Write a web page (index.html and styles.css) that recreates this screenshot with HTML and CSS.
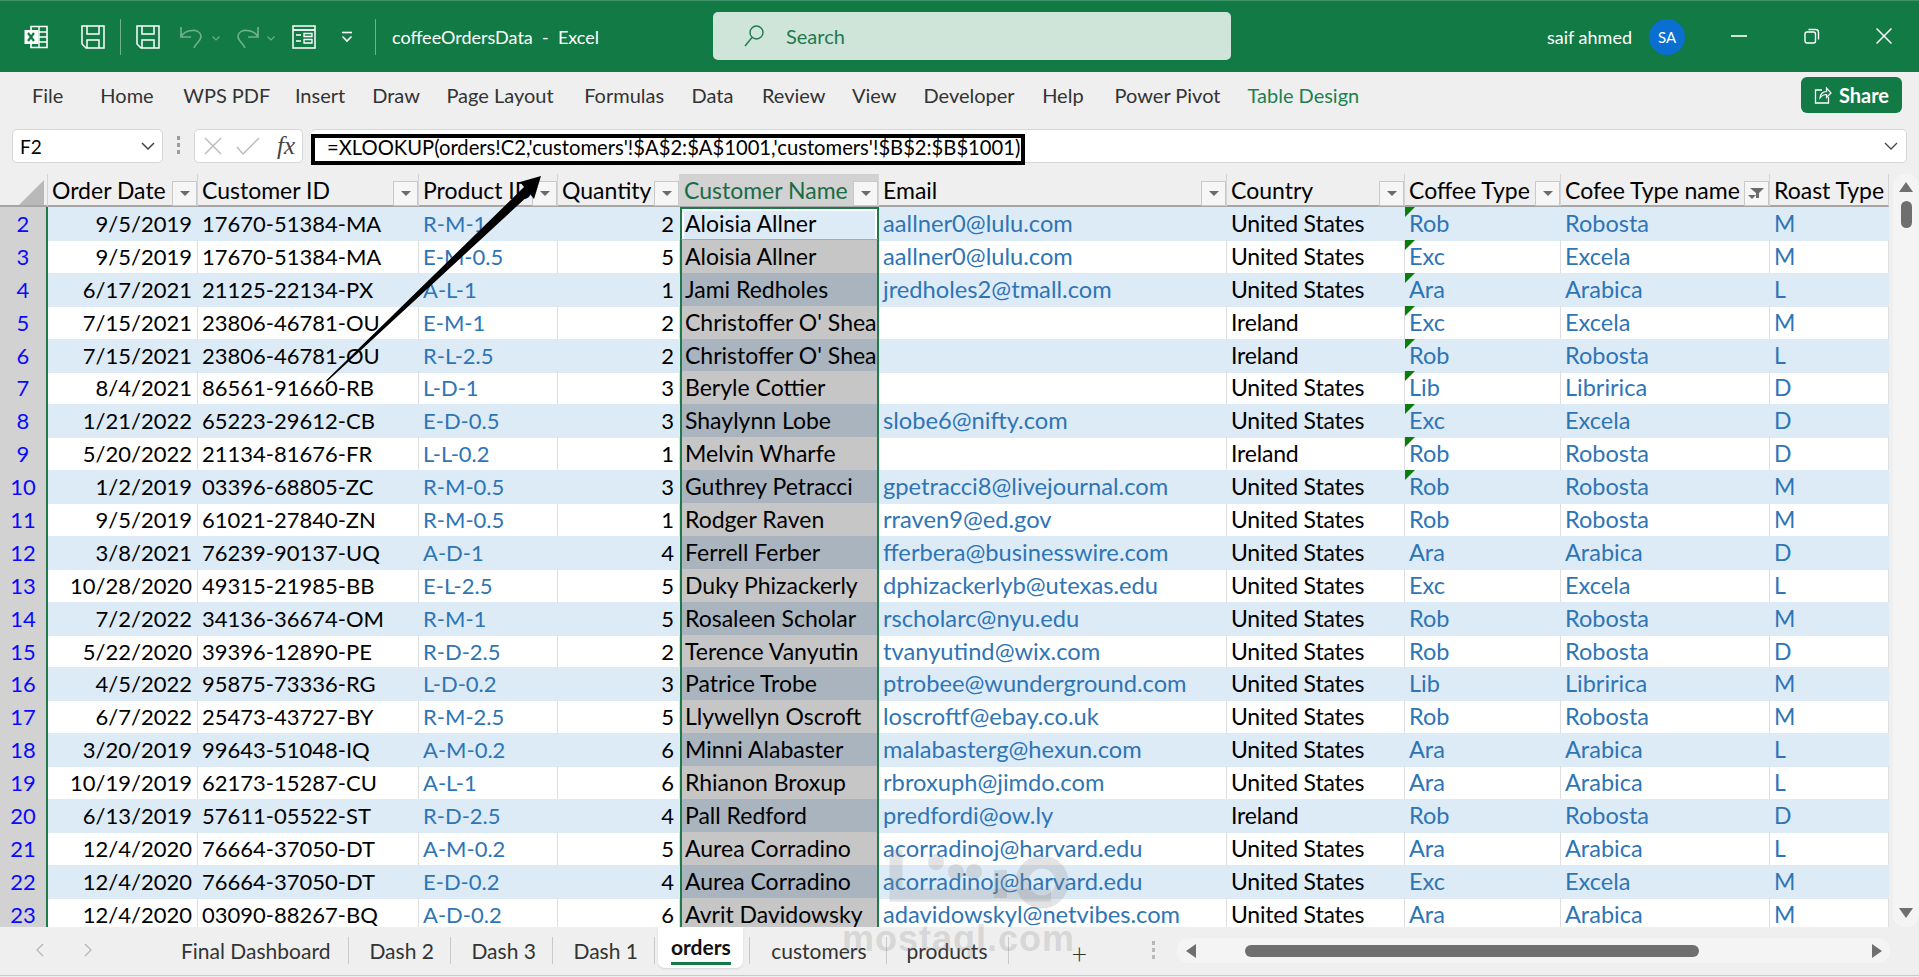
FILE: index.html
```html
<!DOCTYPE html>
<html lang="en">
<head>
<meta charset="utf-8">
<title>coffeeOrdersData - Excel</title>
<link rel="stylesheet" href="styles.css">
</head>
<body>
<header class="titlebar">
  <svg class="qa logo" viewBox="0 0 24 24" width="24" height="24"><path d="M7 1.5h16v21H7z" fill="none" stroke="#fff" stroke-width="1.6"/><path d="M15 1.5v21M15 7h8M15 12h8M15 17h8" stroke="#fff" stroke-width="1.4"/><rect x="0.5" y="5" width="14" height="14" fill="#fff"/><path d="M4 8l6 8M10 8l-6 8" stroke="#107c41" stroke-width="2.2"/></svg>
  <svg class="qa save1" viewBox="0 0 24 24" width="24" height="24"><path d="M1 1h22v22H5l-4-4z" fill="none" stroke="#fff" stroke-width="1.5"/><path d="M6 1v8h12V1M6 23v-8h12v8" fill="none" stroke="#fff" stroke-width="1.5"/></svg>
  <span class="tsep sep1"></span>
  <svg class="qa save2" viewBox="0 0 24 24" width="24" height="24"><path d="M1 1h22v22H5l-4-4z" fill="none" stroke="#fff" stroke-width="1.5"/><path d="M6 1v8h12V1M6 23v-8h12v8" fill="none" stroke="#fff" stroke-width="1.5"/></svg>
  <svg class="qa undo" viewBox="0 0 22 24" width="22" height="24"><path d="M1 2v10h10M1 12C5 4 20 3 21 11c0 5-5 7-7 12" fill="none" stroke="#6fb08f" stroke-width="1.7"/></svg>
  <svg class="qa chev chev1" viewBox="0 0 8 5" width="8" height="5"><path d="M.5.5L4 4 7.500.5" fill="none" stroke="#6fb08f" stroke-width="1.1"/></svg>
  <svg class="qa redo" viewBox="0 0 22 24" width="22" height="24"><path d="M21 2v10H11M21 12C17 4 2 3 1 11c0 5 5 7 7 12" fill="none" stroke="#6fb08f" stroke-width="1.7"/></svg>
  <svg class="qa chev chev2" viewBox="0 0 8 5" width="8" height="5"><path d="M.5.5L4 4 7.500.5" fill="none" stroke="#6fb08f" stroke-width="1.1"/></svg>
  <svg class="qa form" viewBox="0 0 24 24" width="24" height="24"><path d="M1 1h22v22H1z" fill="none" stroke="#fff" stroke-width="1.500"/><path d="M1 5h22" stroke="#fff" stroke-width="1.800"/><path d="M4 10h5M4 16h5" stroke="#fff" stroke-width="1.500"/><path d="M12 8.500h8v3h-8zM12 14.500h8v3.500h-8z" fill="none" stroke="#fff" stroke-width="1.300"/></svg>
  <svg class="qa drop" viewBox="0 0 12 12" width="12" height="12"><path d="M1 1.500h10" stroke="#fff" stroke-width="1.600"/><path d="M1.500 5.500L6 10l4.500-4.500" fill="none" stroke="#fff" stroke-width="1.600"/></svg>
  <span class="tsep sep2"></span>
  <span class="doc">coffeeOrdersData &nbsp;-&nbsp; Excel</span>
  <div class="search">
    <svg viewBox="0 0 20 22" width="20" height="22"><circle cx="12.500" cy="7.500" r="6.500" fill="none" stroke="#1f7a4c" stroke-width="1.400"/><path d="M8 12.500L1 21" stroke="#1f7a4c" stroke-width="1.400"/></svg>
    <span>Search</span>
  </div>
  <span class="user">saif ahmed</span>
  <span class="avatar">SA</span>
  <svg class="win wmin" viewBox="0 0 16 2" width="16" height="2"><path d="M0 1h16" stroke="#fff" stroke-width="1.600"/></svg>
  <svg class="win wres" viewBox="0 0 16 16" width="16" height="16"><rect x="1" y="4" width="10.500" height="11" rx="2" fill="none" stroke="#fff" stroke-width="1.400"/><path d="M4.500 1.500h7a3 3 0 0 1 3 3v7" fill="none" stroke="#fff" stroke-width="1.400"/></svg>
  <svg class="win wclose" viewBox="0 0 16 16" width="16" height="16"><path d="M.5.5l15 15M15.500.5l-15 15" stroke="#fff" stroke-width="1.500"/></svg>
</header>

<nav class="ribbon">
  <span class="rt rt-file">File</span><span class="rt rt-home">Home</span><span class="rt rt-wps">WPS PDF</span><span class="rt rt-ins">Insert</span><span class="rt rt-draw">Draw</span><span class="rt rt-page">Page Layout</span><span class="rt rt-form">Formulas</span><span class="rt rt-data">Data</span><span class="rt rt-rev">Review</span><span class="rt rt-view">View</span><span class="rt rt-dev">Developer</span><span class="rt rt-help">Help</span><span class="rt rt-pp">Power Pivot</span><span class="rt rt-td">Table Design</span>
  <button class="share"><svg viewBox="0 0 18 18" width="18" height="18"><path d="M8 4H1.500v13h13v-6" fill="none" stroke="#fff" stroke-width="1.300"/><path d="M6 12c0-4 3-6.500 6.500-6.500V2L17 7l-4.500 4.500V8.500C9.500 8.500 7.500 10 6 12z" fill="none" stroke="#fff" stroke-width="1.200"/></svg>Share</button>
</nav>

<section class="formula">
  <div class="namebox"><span>F2</span><svg viewBox="0 0 14 8" width="14" height="8"><path d="M1 1l6 6 6-6" fill="none" stroke="#444" stroke-width="1.500"/></svg></div>
  <div class="fdots"><i></i><i></i><i></i></div>
  <div class="fxbox">
    <svg viewBox="0 0 18 18" width="18" height="18"><path d="M1 1l16 16M17 1L1 17" stroke="#bdbdbd" stroke-width="1.500"/></svg>
    <svg viewBox="0 0 24 18" width="24" height="18"><path d="M1 10l6 7L23 1" fill="none" stroke="#bdbdbd" stroke-width="1.500"/></svg>
    <em>fx</em>
  </div>
  <div class="fbar">
    <div class="fhl">=XLOOKUP(orders!C2,'customers'!$A$2:$A$1001,'customers'!$B$2:$B$1001)</div>
    <svg class="fexp" viewBox="0 0 14 8" width="14" height="8"><path d="M1 1l6 6 6-6" fill="none" stroke="#444" stroke-width="1.300"/></svg>
  </div>
</section>

<main class="sheet">
  <div class="grid">
    <div class="row head">
      <div class="hc corner"><i></i></div>
      <div class="hc">Order Date<b class="fb"></b></div>
      <div class="hc">Customer ID<b class="fb"></b></div>
      <div class="hc">Product ID<b class="fb"></b></div>
      <div class="hc">Quantity<b class="fb"></b></div>
      <div class="hc hsel">Customer Name<b class="fb"></b></div>
      <div class="hc">Email<b class="fb"></b></div>
      <div class="hc">Country<b class="fb"></b></div>
      <div class="hc">Coffee Type<b class="fb"></b></div>
      <div class="hc">Cofee Type name<b class="fb on"><svg viewBox="0 0 14 10" width="14" height="10"><path d="M0 0h14L9 5v5H6V5z" fill="#6b6b6b"/></svg></b></div>
      <div class="hc">Roast Type</div>
    </div>
    <div class="row blue active"><div class="rn">2</div><div class="c r">9/5/2019</div><div class="c">17670-51384-MA</div><div class="c l">R-M-1</div><div class="c r">2</div><div class="c s">Aloisia Allner</div><div class="c l">aallner0@lulu.com</div><div class="c">United States</div><div class="c l t">Rob</div><div class="c l">Robosta</div><div class="c l">M</div></div>
    <div class="row"><div class="rn">3</div><div class="c r">9/5/2019</div><div class="c">17670-51384-MA</div><div class="c l">E-M-0.5</div><div class="c r">5</div><div class="c s">Aloisia Allner</div><div class="c l">aallner0@lulu.com</div><div class="c">United States</div><div class="c l t">Exc</div><div class="c l">Excela</div><div class="c l">M</div></div>
    <div class="row blue"><div class="rn">4</div><div class="c r">6/17/2021</div><div class="c">21125-22134-PX</div><div class="c l">A-L-1</div><div class="c r">1</div><div class="c s">Jami Redholes</div><div class="c l">jredholes2@tmall.com</div><div class="c">United States</div><div class="c l t">Ara</div><div class="c l">Arabica</div><div class="c l">L</div></div>
    <div class="row"><div class="rn">5</div><div class="c r">7/15/2021</div><div class="c">23806-46781-OU</div><div class="c l">E-M-1</div><div class="c r">2</div><div class="c s">Christoffer O' Shea</div><div class="c l"></div><div class="c">Ireland</div><div class="c l t">Exc</div><div class="c l">Excela</div><div class="c l">M</div></div>
    <div class="row blue"><div class="rn">6</div><div class="c r">7/15/2021</div><div class="c">23806-46781-OU</div><div class="c l">R-L-2.5</div><div class="c r">2</div><div class="c s">Christoffer O' Shea</div><div class="c l"></div><div class="c">Ireland</div><div class="c l t">Rob</div><div class="c l">Robosta</div><div class="c l">L</div></div>
    <div class="row"><div class="rn">7</div><div class="c r">8/4/2021</div><div class="c">86561-91660-RB</div><div class="c l">L-D-1</div><div class="c r">3</div><div class="c s">Beryle Cottier</div><div class="c l"></div><div class="c">United States</div><div class="c l t">Lib</div><div class="c l">Libririca</div><div class="c l">D</div></div>
    <div class="row blue"><div class="rn">8</div><div class="c r">1/21/2022</div><div class="c">65223-29612-CB</div><div class="c l">E-D-0.5</div><div class="c r">3</div><div class="c s">Shaylynn Lobe</div><div class="c l">slobe6@nifty.com</div><div class="c">United States</div><div class="c l t">Exc</div><div class="c l">Excela</div><div class="c l">D</div></div>
    <div class="row"><div class="rn">9</div><div class="c r">5/20/2022</div><div class="c">21134-81676-FR</div><div class="c l">L-L-0.2</div><div class="c r">1</div><div class="c s">Melvin Wharfe</div><div class="c l"></div><div class="c">Ireland</div><div class="c l t">Rob</div><div class="c l">Robosta</div><div class="c l">D</div></div>
    <div class="row blue"><div class="rn">10</div><div class="c r">1/2/2019</div><div class="c">03396-68805-ZC</div><div class="c l">R-M-0.5</div><div class="c r">3</div><div class="c s">Guthrey Petracci</div><div class="c l">gpetracci8@livejournal.com</div><div class="c">United States</div><div class="c l t">Rob</div><div class="c l">Robosta</div><div class="c l">M</div></div>
    <div class="row"><div class="rn">11</div><div class="c r">9/5/2019</div><div class="c">61021-27840-ZN</div><div class="c l">R-M-0.5</div><div class="c r">1</div><div class="c s">Rodger Raven</div><div class="c l">rraven9@ed.gov</div><div class="c">United States</div><div class="c l">Rob</div><div class="c l">Robosta</div><div class="c l">M</div></div>
    <div class="row blue"><div class="rn">12</div><div class="c r">3/8/2021</div><div class="c">76239-90137-UQ</div><div class="c l">A-D-1</div><div class="c r">4</div><div class="c s">Ferrell Ferber</div><div class="c l">fferbera@businesswire.com</div><div class="c">United States</div><div class="c l">Ara</div><div class="c l">Arabica</div><div class="c l">D</div></div>
    <div class="row"><div class="rn">13</div><div class="c r">10/28/2020</div><div class="c">49315-21985-BB</div><div class="c l">E-L-2.5</div><div class="c r">5</div><div class="c s">Duky Phizackerly</div><div class="c l">dphizackerlyb@utexas.edu</div><div class="c">United States</div><div class="c l">Exc</div><div class="c l">Excela</div><div class="c l">L</div></div>
    <div class="row blue"><div class="rn">14</div><div class="c r">7/2/2022</div><div class="c">34136-36674-OM</div><div class="c l">R-M-1</div><div class="c r">5</div><div class="c s">Rosaleen Scholar</div><div class="c l">rscholarc@nyu.edu</div><div class="c">United States</div><div class="c l">Rob</div><div class="c l">Robosta</div><div class="c l">M</div></div>
    <div class="row"><div class="rn">15</div><div class="c r">5/22/2020</div><div class="c">39396-12890-PE</div><div class="c l">R-D-2.5</div><div class="c r">2</div><div class="c s">Terence Vanyutin</div><div class="c l">tvanyutind@wix.com</div><div class="c">United States</div><div class="c l">Rob</div><div class="c l">Robosta</div><div class="c l">D</div></div>
    <div class="row blue"><div class="rn">16</div><div class="c r">4/5/2022</div><div class="c">95875-73336-RG</div><div class="c l">L-D-0.2</div><div class="c r">3</div><div class="c s">Patrice Trobe</div><div class="c l">ptrobee@wunderground.com</div><div class="c">United States</div><div class="c l">Lib</div><div class="c l">Libririca</div><div class="c l">M</div></div>
    <div class="row"><div class="rn">17</div><div class="c r">6/7/2022</div><div class="c">25473-43727-BY</div><div class="c l">R-M-2.5</div><div class="c r">5</div><div class="c s">Llywellyn Oscroft</div><div class="c l">loscroftf@ebay.co.uk</div><div class="c">United States</div><div class="c l">Rob</div><div class="c l">Robosta</div><div class="c l">M</div></div>
    <div class="row blue"><div class="rn">18</div><div class="c r">3/20/2019</div><div class="c">99643-51048-IQ</div><div class="c l">A-M-0.2</div><div class="c r">6</div><div class="c s">Minni Alabaster</div><div class="c l">malabasterg@hexun.com</div><div class="c">United States</div><div class="c l">Ara</div><div class="c l">Arabica</div><div class="c l">L</div></div>
    <div class="row"><div class="rn">19</div><div class="c r">10/19/2019</div><div class="c">62173-15287-CU</div><div class="c l">A-L-1</div><div class="c r">6</div><div class="c s">Rhianon Broxup</div><div class="c l">rbroxuph@jimdo.com</div><div class="c">United States</div><div class="c l">Ara</div><div class="c l">Arabica</div><div class="c l">L</div></div>
    <div class="row blue"><div class="rn">20</div><div class="c r">6/13/2019</div><div class="c">57611-05522-ST</div><div class="c l">R-D-2.5</div><div class="c r">4</div><div class="c s">Pall Redford</div><div class="c l">predfordi@ow.ly</div><div class="c">Ireland</div><div class="c l">Rob</div><div class="c l">Robosta</div><div class="c l">D</div></div>
    <div class="row"><div class="rn">21</div><div class="c r">12/4/2020</div><div class="c">76664-37050-DT</div><div class="c l">A-M-0.2</div><div class="c r">5</div><div class="c s">Aurea Corradino</div><div class="c l">acorradinoj@harvard.edu</div><div class="c">United States</div><div class="c l">Ara</div><div class="c l">Arabica</div><div class="c l">L</div></div>
    <div class="row blue"><div class="rn">22</div><div class="c r">12/4/2020</div><div class="c">76664-37050-DT</div><div class="c l">E-D-0.2</div><div class="c r">4</div><div class="c s">Aurea Corradino</div><div class="c l">acorradinoj@harvard.edu</div><div class="c">United States</div><div class="c l">Exc</div><div class="c l">Excela</div><div class="c l">M</div></div>
    <div class="row"><div class="rn">23</div><div class="c r">12/4/2020</div><div class="c">03090-88267-BQ</div><div class="c l">A-D-0.2</div><div class="c r">6</div><div class="c s">Avrit Davidowsky</div><div class="c l">adavidowskyl@netvibes.com</div><div class="c">United States</div><div class="c l">Ara</div><div class="c l">Arabica</div><div class="c l">M</div></div>
  </div>
  <aside class="vscroll">
    <i class="up"></i><i class="vthumb"></i><span class="vspace"></span><i class="down"></i>
  </aside>
</main>

<footer class="tabs">
  <div class="tabnav">
    <svg viewBox="0 0 8 14" width="8" height="14"><path d="M7 1L1 7l6 6" fill="none" stroke="#b5b5b5" stroke-width="1.200"/></svg>
    <svg viewBox="0 0 8 14" width="8" height="14"><path d="M1 1l6 6-6 6" fill="none" stroke="#b5b5b5" stroke-width="1.200"/></svg>
  </div>
  <span class="tab first">Final Dashboard</span><span class="tab">Dash 2</span><span class="tab">Dash 3</span><span class="tab">Dash 1</span>
  <span class="tab current"><u>orders</u></span>
  <span class="tab after">customers</span><span class="tab">products</span>
  <span class="plus">+</span>
  <div class="tdots"><i></i><i></i><i></i></div>
  <div class="hscroll"><i class="left"></i><i class="hthumb"></i><i class="right"></i></div>
</footer>
<div class="status"></div>

<svg class="arrow" viewBox="0 0 1919 977" width="1919" height="977"><path d="M326 380.500L524 187 520 182 541 176 534 199 530 194 327 381.500z" fill="#000"/></svg>

<svg class="wm-logo" viewBox="0 0 190 70" width="190" height="70"><g fill="none" stroke="#8a8a8a" stroke-opacity=".24" stroke-width="13"><path d="M14 0v45h155"/><circle cx="160" cy="32" r="20"/></g><g fill="#8a8a8a" fill-opacity=".24"><circle cx="54" cy="12" r="8"/><circle cx="92" cy="22" r="8"/><circle cx="74" cy="22" r="8"/><rect x="112" y="20" width="13" height="28"/></g></svg>
<div class="wm-text">mostaql.com</div>
</body>
</html>
```
FILE: styles.css
```css
* { box-sizing: border-box; }
html, body { margin: 0; padding: 0; }
body {
  position: relative;
  width: 1919px;
  height: 977px;
  overflow: hidden;
  background: #efefef;
  font-family: "Lato", "Open Sans", sans-serif;
  color: #000;
}
i { display: block; font-style: normal; }

/* title bar */
.titlebar {
  display: flex;
  align-items: center;
  height: 72px;
  background: #117a45;
  border-top: 1px solid #3f9168;
  color: #fff;
  padding-left: 24px;
}
.qa { flex: none; }
.save1 { margin-left: 33px; }
.tsep { flex: none; width: 1px; height: 36px; background: #6fb08f; }
.sep1 { margin-left: 15px; }
.save2 { margin-left: 15px; }
.undo { margin-left: 20px; }
.chev1 { margin-left: 10px; margin-top: 4px; }
.redo { margin-left: 17px; }
.chev2 { margin-left: 8px; margin-top: 4px; }
.form { margin-left: 17px; }
.drop { margin-left: 25px; }
.sep2 { margin-left: 22px; }
.doc { margin-left: 16px; width: 204px; font-size: 18px; white-space: nowrap; }
.search {
  display: flex;
  align-items: center;
  gap: 22px;
  margin-left: 117px;
  margin-top: -1px;
  width: 518px;
  height: 48px;
  padding-left: 31px;
  background: #cfe5da;
  border-radius: 5px;
  color: #1f7a4c;
  font-size: 20px;
}
.user { margin-left: auto; font-size: 18px; }
.avatar {
  display: flex;
  align-items: center;
  justify-content: center;
  width: 36px;
  height: 36px;
  margin-left: 17px;
  border-radius: 50%;
  background: #0a6fd0;
  font-size: 15px;
}
.win { flex: none; margin-top: -2px; }
.wmin { margin-left: 46px; }
.wres { margin-left: 57px; }
.wclose { margin-left: 56px; margin-right: 27px; }

/* ribbon */
.ribbon {
  display: flex;
  align-items: center;
  height: 52px;
  padding: 0 0 7px 32px;
  font-size: 20px;
  color: #333;
}
.rt { white-space: nowrap; }
.rt-home { margin-left: 37px; }
.rt-wps { margin-left: 29.5px; }
.rt-ins { margin-left: 24.5px; }
.rt-draw { margin-left: 27px; }
.rt-page { margin-left: 26.5px; }
.rt-form { margin-left: 30.5px; }
.rt-data { margin-left: 27.5px; }
.rt-rev { margin-left: 28.5px; }
.rt-view { margin-left: 26.5px; }
.rt-dev { margin-left: 27px; }
.rt-help { margin-left: 27.5px; }
.rt-pp { margin-left: 31px; }
.rt-td { margin-left: 27px; color: #1c7f4f; }
.share {
  display: flex;
  align-items: center;
  justify-content: center;
  gap: 7px;
  margin-left: auto;
  margin-right: 17px;
  width: 101px;
  height: 36px;
  border: 0;
  border-radius: 6px;
  background: #117a45;
  color: #fff;
  font: 700 20px "Lato", sans-serif;
}

/* formula bar */
.formula {
  display: flex;
  height: 50px;
  padding: 5px 12px 11px;
}
.namebox, .fxbox, .fbar {
  display: flex;
  align-items: center;
  height: 34px;
  background: #fff;
  border: 1px solid #d6d6d6;
  border-radius: 5px;
}
.namebox {
  justify-content: space-between;
  width: 151px;
  padding: 0 7px;
  font-size: 19px;
}
.fdots { width: 31px; padding-top: 7px; }
.fdots i { width: 3px; height: 4px; margin: 0 auto 3px; background: #9d9d9d; }
.fxbox { gap: 14px; width: 109px; padding-left: 9px; }
.fxbox em { margin-left: 3px; font: italic 25px "Liberation Serif", serif; color: #444; }
.fbar {
  flex: 1;
  margin-left: 8px;
  align-items: flex-start;
  justify-content: space-between;
  padding-right: 8px;
  border-left: 0;
}
.fhl {
  width: 714px;
  height: 31px;
  margin-top: 4px;
  padding: 0 0 0 12px;
  border: 4px solid #000;
  background: #fff;
  font-size: 20.2px;
  line-height: 19px;
  white-space: nowrap;
}
.fexp { margin-top: 12px; }

/* sheet */
.sheet {
  display: flex;
  height: 753px;
  overflow: hidden;
}
.grid { flex: none; width: 1889px; background: #fff; }
.row {
  display: grid;
  grid-template-columns: 48px 150px 221px 139px 122px 199px 348px 178px 156px 209px 119px;
  height: 32.9px;
}
.head { height: 33px; background: #efefef; border-bottom: 2px solid #a6a6a6; }
.hc {
  display: flex;
  align-items: center;
  justify-content: space-between;
  height: 32px;
  padding-left: 4px;
  border-right: 1px solid #d4d4d4;
  font-size: 23px;
  white-space: nowrap;
}
.hsel { background: #d2d2d2; color: #1b6b47; }
.corner { position: relative; padding: 0; }
.corner i {
  width: 0; height: 0; margin: 4px 3px 0 auto;
  border-style: solid;
  border-width: 0 0 25px 25px;
  border-color: transparent transparent #b9b9b9 transparent;
}
.fb {
  display: flex;
  align-items: center;
  justify-content: center;
  flex: none;
  width: 25px;
  height: 25px;
  margin-top: 6px;
  background: #f6f6f6;
  border: 1px solid #c9c9c9;
  position: relative;
}
.fb::after {
  content: "";
  width: 0; height: 0;
  border-style: solid;
  border-width: 5px 5px 0;
  border-color: #6b6b6b transparent transparent;
}
.fb.on::after { position: absolute; left: 3px; bottom: 6px; border-width: 4px 4px 0; }
.rn {
  background: #d2d2d2;
  border-bottom: 1px solid #b7b7b7;
  border-right: 2px solid #1f7a4c;
  color: #0a0aff;
  font-size: 22px;
  line-height: 33px;
  text-align: center;
}
.c {
  position: relative;
  padding: 0 5px 0 4px;
  border-right: 1px solid #dedede;
  font-size: 22px;
  line-height: 33px;
  white-space: nowrap;
  overflow: hidden;
}
.c:nth-child(6) { font-size: 23px; }
.c:nth-child(7) { font-size: 23.7px; }
.c:nth-child(8) { font-size: 23px; letter-spacing: -.2px; }
.c:nth-child(9), .c:nth-child(10) { font-size: 23.5px; }
.c:nth-child(11) { font-size: 23px; }
.blue .c { background: #ddebf7; border-right-color: #ddebf7; }
.r { text-align: right; }
.l { color: #2e75b6; }
.s {
  background: #c6c6c6;
  border-left: 2px solid #1f7a4c;
  border-right: 2px solid #1f7a4c;
  padding-left: 3px;
}
.blue .s { background: #a9b4bf; border-right-color: #1f7a4c; }
.active .s {
  background: #ddebf7;
  border-top: 2px solid #1f7a4c;
  border-bottom: 2px solid #a9a9a9;
  line-height: 29px;
  box-shadow: inset 2px 0 #fff, inset -2px 0 #fff, inset 0 2px #fff;
}
.t::before {
  content: "";
  position: absolute;
  left: 0; top: 0;
  border-style: solid;
  border-width: 10px 10px 0 0;
  border-color: #0a7d0a transparent transparent transparent;
}

/* scroll bars */
.vscroll {
  display: flex;
  flex-direction: column;
  align-items: center;
  width: 26px;
  height: 753px;
  margin-left: 4px;
  background: #f4f4f4;
  border-radius: 12px 12px 12px 12px;
}
.up { margin-top: 8px; border: solid transparent; border-width: 0 7px 10px; border-bottom-color: #6f6f6f; }
.down { margin-bottom: 9px; border: solid transparent; border-width: 10px 7px 0; border-top-color: #6f6f6f; }
.vthumb { margin-top: 9px; width: 11px; height: 27px; background: #6f6f6f; border-radius: 6px; }
.vspace { flex: 1; }

/* sheet tabs */
.tabs {
  display: flex;
  align-items: flex-start;
  height: 48px;
  font-size: 21px;
  color: #333;
}
.tabnav { display: flex; gap: 40px; width: 161px; padding: 16px 0 0 36px; }
.tab {
  height: 27px;
  margin-top: 10px;
  padding: 0 16.5px 0 20px;
  border-right: 1px solid #c9c9c9;
  line-height: 27px;
  white-space: nowrap;
}
.first { padding-right: 18px; }
.current {
  height: 41px;
  margin: 0 6px 0 3px;
  padding: 5px 12.5px 0;
  background: #fff;
  border: 0;
  border-radius: 0 0 7px 7px;
  box-shadow: 0 1px 2px #d4d4d4;
  color: #111;
  font-weight: 700;
}
.current u {
  display: block;
  text-decoration: none;
  border-bottom: 3px solid #117a45;
  line-height: 30px;
}
.after { padding: 0 20px 0 21px; border-left: 1px solid #c9c9c9; }
.after + .tab { padding: 0 20px 0 19px; }
.plus { margin: 11px 0 0 63px; font-size: 27px; font-weight: 300; line-height: 32px; }
.tdots { width: 3px; margin: 14px 0 0 65px; }
.tdots i { width: 3px; height: 4px; margin-bottom: 3px; background: #b9b9b9; }
.hscroll {
  display: flex;
  align-items: center;
  width: 713px;
  height: 25px;
  margin: 11px 0 0 22px;
  padding: 0 8px 0 9px;
  background: #f4f4f4;
  border-radius: 12px;
}
.left { border: solid transparent; border-width: 7px 10px 7px 0; border-right-color: #6f6f6f; }
.right { margin-left: auto; border: solid transparent; border-width: 7px 0 7px 10px; border-left-color: #6f6f6f; }
.hthumb { margin-left: 49px; width: 454px; height: 12px; background: #6f6f6f; border-radius: 6px; }
.status { height: 2px; border-top: 1px solid #c9c9c9; }

/* annotation and watermark above the page */
.arrow { position: absolute; left: 0; top: 0; pointer-events: none; }
.wm-logo { position: absolute; left: 882px; top: 850px; }
.wm-text {
  position: absolute;
  left: 842px;
  top: 918px;
  font: 700 36px "Liberation Sans", sans-serif;
  letter-spacing: 1px;
  color: rgba(130,130,130,.24);
  white-space: nowrap;
}
```
